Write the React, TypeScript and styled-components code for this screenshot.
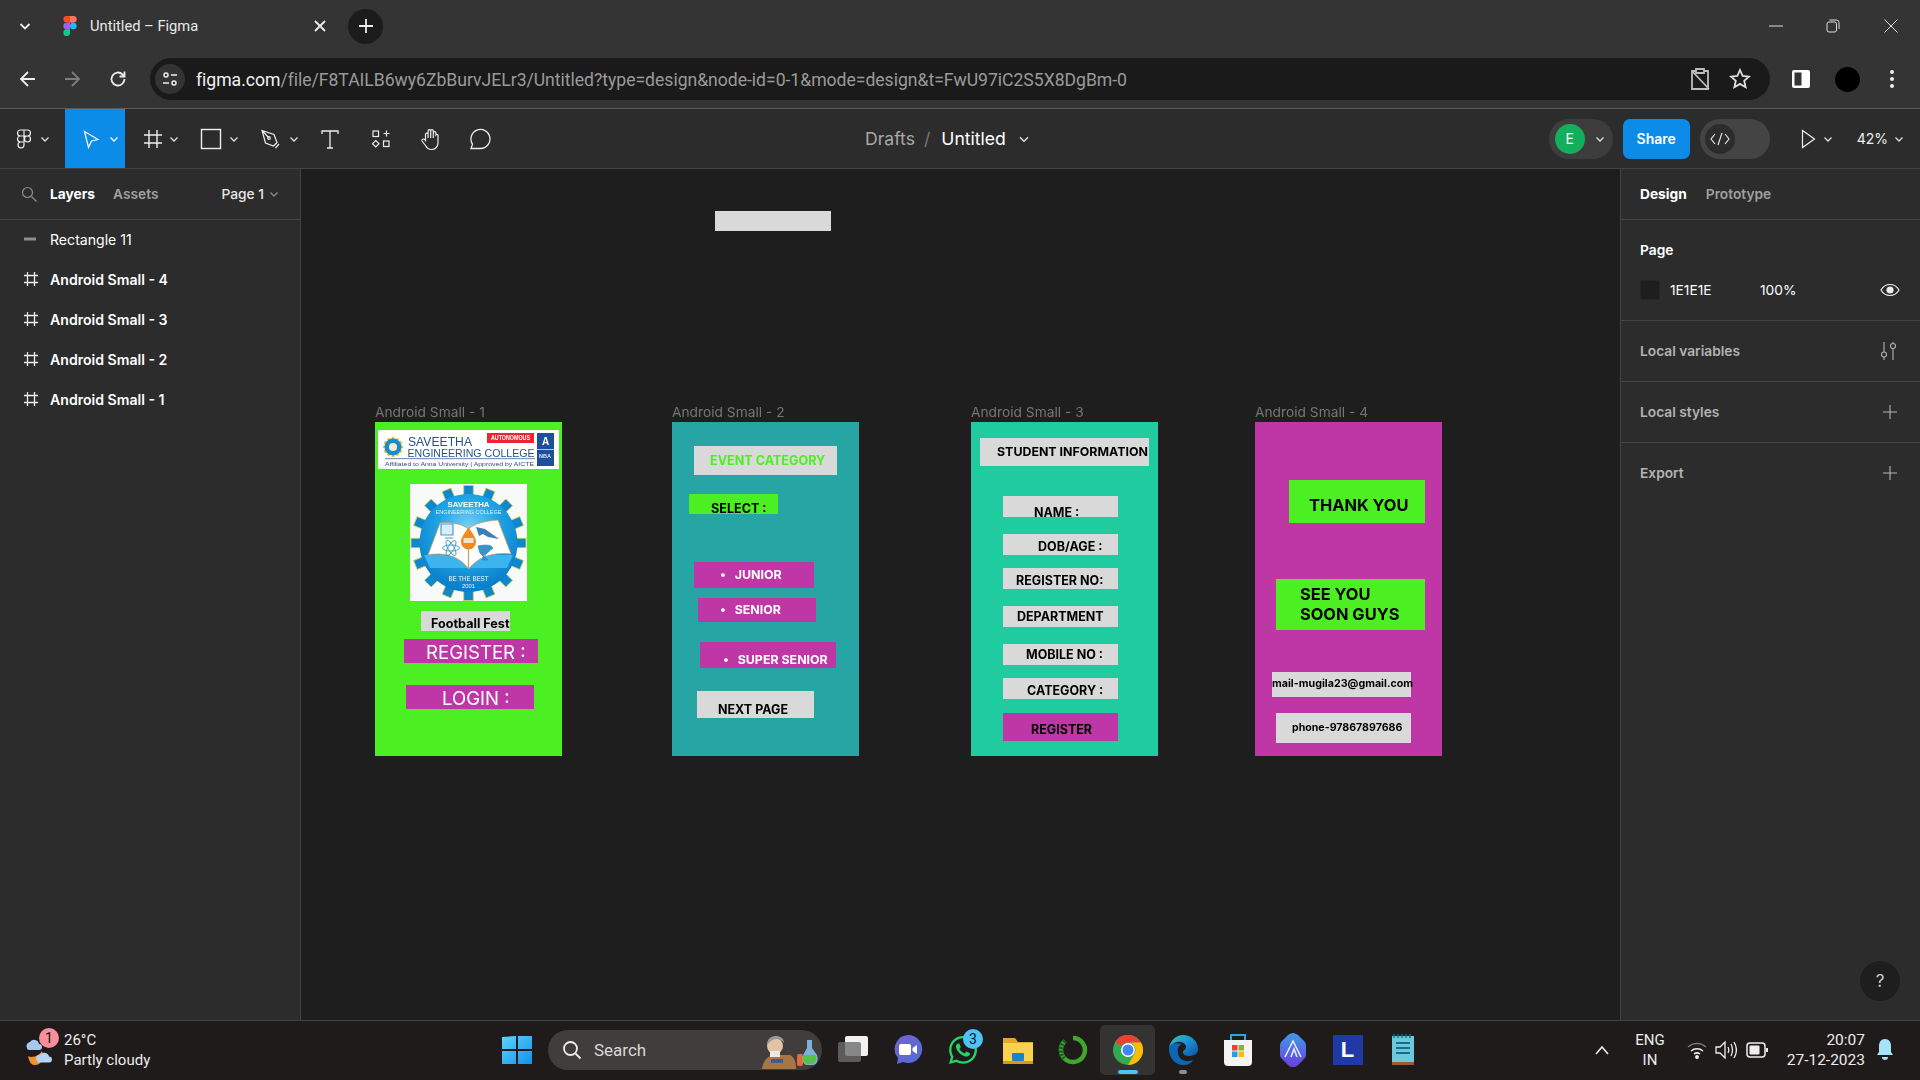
import React from "react";
import styled, { createGlobalStyle } from "styled-components";
import { FaWhatsapp } from "react-icons/fa";

const Global = createGlobalStyle`
  html, body { margin: 0; padding: 0; background: #1e1e1e; overflow: hidden; }
  * { box-sizing: border-box; }
`;

const Page = styled.div`
  width: 1920px; height: 1080px; display: flex; flex-direction: column; overflow: hidden;
  font-family: Inter, "Liberation Sans", sans-serif; color: #fff;
`;
/* Browser chrome */
const TabStrip = styled.div`
  height: 54px; background: #343434; display: flex; align-items: center; padding: 0 0 2px 17px; font-family: Roboto, sans-serif;
`;
const StripSlot = styled.div<{ $w: number }>`
  width: ${p => p.$w}px; display: flex; align-items: center; flex: none;
`;
const TabTitle = styled.span`
  font-size: 14.7px; color: #e8e8e8; margin-left: 13px; flex: 1; white-space: nowrap;
`;
const NewTab = styled.div`
  width: 35px; height: 35px; border-radius: 50%; background: #1c1c1c; display: flex; align-items: center; justify-content: center; flex: none;
`;
const WindowControls = styled.div`
  margin-left: auto; display: flex; height: 100%; align-items: center;
`;
const WinBtn = styled.div<{ $w: number }>`
  width: ${p => p.$w}px; display: flex; justify-content: center; align-items: center;
`;
const AddressRow = styled.div`
  height: 55px; background: #343434; border-bottom: 1px solid #5a5a5a; display: flex; align-items: flex-start; padding: 4px 0 0 0;
`;
const NavBtn = styled.div<{ $w: number }>`
  width: ${p => p.$w}px; height: 42px; display: flex; align-items: center; justify-content: center; flex: none;
`;
const Omnibox = styled.div`
  width: 1620px; height: 42px; margin-left: 4px; border-radius: 21px; background: #1a1a1a; display: flex; align-items: center; padding: 0 10px 0 5px; flex: none;
`;
const SiteChip = styled.div`
  width: 30px; height: 30px; border-radius: 50%; background: #333; display: flex; align-items: center; justify-content: center; flex: none;
`;
const UrlText = styled.div`
  margin-left: 11px; padding-top: 1px; font: 17.63px Roboto, sans-serif; color: #9a9a9a; white-space: nowrap; flex: 1;
  letter-spacing: -0.03px;
  b { font-weight: 400; color: #f2f2f2; }
`;
const OmniIcon = styled.div`
  width: 40px; display: flex; justify-content: center; flex: none;
`;
const Avatar = styled.div`
  width: 25px; height: 25px; border-radius: 50%; background: #000;
`;
/* Figma toolbar */
const Toolbar = styled.div`
  height: 60px; background: #2c2c2c; border-bottom: 1px solid #444; display: flex; align-items: stretch; flex: none;
`;
const ToolBtn = styled.div<{ $w: number; $pl: number; $gap?: number; $on?: boolean }>`
  width: ${p => p.$w}px; padding-left: ${p => p.$pl}px; gap: ${p => p.$gap ?? 0}px; flex: none;
  background: ${p => (p.$on ? "#0c8ce9" : "transparent")}; display: flex; align-items: center;
`;
const Title = styled.div`
  margin-left: 360px; display: flex; align-items: center; font-size: 17.6px; white-space: nowrap;
`;
const Muted = styled.span`
  color: #a8a8a8;
`;
const Slash = styled.span`
  color: #777; margin: 0 11px 0 9px;
`;
const ToolRight = styled.div`
  margin-left: auto; display: flex; align-items: center; padding-right: 15px;
`;
const UserPill = styled.div`
  width: 64px; height: 40px; border-radius: 20px; background: #3d3d3d; display: flex; align-items: center; padding-left: 6px; gap: 9px;
`;
const UserDot = styled.div`
  width: 30px; height: 30px; border-radius: 50%; background: #14ae5c; display: flex; align-items: center; justify-content: center; font-size: 14px;
`;
const ShareBtn = styled.div`
  width: 67px; height: 40px; margin-left: 10px; border-radius: 7px; background: #0c8ce9; display: flex; align-items: center; justify-content: center; font-size: 14px; font-weight: 600;
`;
const CodePill = styled.div`
  width: 70px; height: 40px; margin-left: 10px; border-radius: 20px; background: #444; display: flex; align-items: center; padding-left: 5px;
`;
const CodeKnob = styled.div`
  width: 30px; height: 30px; border-radius: 50%; background: #2c2c2c; display: flex; align-items: center; justify-content: center;
`;
const PlayGroup = styled.div`
  display: flex; align-items: center; margin-left: 31px; gap: 6px;
`;
const Zoom = styled.div`
  display: flex; align-items: center; margin-left: 23px; gap: 5px; font-size: 14px; color: #f0f0f0;
`;
/* Workspace */
const Workspace = styled.div`
  flex: 1; display: flex; min-height: 0;
`;
const LeftPanel = styled.div`
  width: 301px; flex: none; background: #2c2c2c; border-right: 1px solid #444;
`;
const PanelHead = styled.div<{ $pl?: number }>`
  height: 51px; border-bottom: 1px solid #444; display: flex; align-items: center; font-size: 13.75px; font-weight: 600; padding-left: ${p => p.$pl ?? 21}px;
`;
const HeadTab = styled.span<{ $on?: boolean; $ml: number }>`
  margin-left: ${p => p.$ml}px; color: ${p => (p.$on ? "#fff" : "#a0a0a0")}; font-weight: ${p => (p.$on ? 700 : 600)};
`;
const PageSel = styled.span`
  margin-left: auto; margin-right: 20px; display: flex; align-items: center; gap: 4px; color: #e6e6e6; font-weight: 500;
`;
const LayerList = styled.div`
  margin-top: -1px;
`;
const LayerRow = styled.div<{ $bold?: boolean }>`
  height: 40px; display: flex; align-items: center; padding-left: 23px; gap: 13px; font-size: 14.1px; font-weight: ${p => (p.$bold ? 600 : 400)}; color: #fff;
`;
const GlyphBox = styled.span`
  flex: none; width: 14px; height: 16px; display: flex;
`;
const Canvas = styled.div`
  flex: 1; background: #1e1e1e; position: relative;
`;
const TopRect = styled.div`
  position: absolute; left: 414px; top: 42px; width: 116px; height: 20px; background: #d9d9d9;
`;
const DesignFrame = styled.div<{ $x: number; $bg: string }>`
  position: absolute; left: ${p => p.$x}px; top: 253px; width: 187px; height: 334px; background: ${p => p.$bg}; filter: blur(0.3px);
`;
const FrameLabel = styled.div`
  position: absolute; left: 0; top: -18px; font-size: 13.75px; line-height: 16px; color: #757575; white-space: nowrap;
`;
const Block = styled.div<{ $x: number; $y: number; $w: number; $h: number; $bg: string }>`
  position: absolute; left: ${p => p.$x}px; top: ${p => p.$y}px; width: ${p => p.$w}px; height: ${p => p.$h}px; background: ${p => p.$bg};
`;
const BlockText = styled.div<{ $tx: number; $cy: number; $fs: number; $fw: number; $c: string; $lh: number }>`
  position: absolute; left: ${p => p.$tx}px; top: ${p => p.$cy - p.$lh / 2}px; font-size: ${p => p.$fs}px; font-weight: ${p => p.$fw};
  color: ${p => p.$c}; line-height: ${p => p.$lh}px; white-space: pre;
`;
const Art = styled.svg`
  position: absolute; inset: 0; width: 100%; height: 100%; display: block;
`;
const RightPanel = styled.div`
  width: 300px; flex: none; background: #2c2c2c; border-left: 1px solid #444; position: relative;
`;
const PageSection = styled.div`
  height: 101px; border-bottom: 1px solid #444; padding: 21px 0 0 19px;
`;
const SectionTitle = styled.div`
  font-size: 13.75px; font-weight: 600; line-height: 18px;
`;
const FillRow = styled.div`
  margin-top: 21px; display: flex; align-items: center; font-size: 13.75px; height: 20px; padding-right: 20px;
`;
const Swatch = styled.div`
  width: 20px; height: 20px; background: #1e1e1e; border: 1px solid #252525;
`;
const FillName = styled.span`
  margin-left: 10px; width: 90px;
`;
const FillEnd = styled.span`
  margin-left: auto; display: flex;
`;
const AccRow = styled.div<{ $last?: boolean }>`
  height: ${p => (p.$last ? 59 : 61)}px; border-bottom: ${p => (p.$last ? "none" : "1px solid #444")}; display: flex; align-items: center; justify-content: space-between;
  padding: 0 22px 0 19px; font-size: 13.75px; font-weight: 600; color: #b3b3b3;
`;
const Help = styled.div`
  position: absolute; right: 20px; bottom: 19px; width: 40px; height: 40px; border-radius: 50%; background: #1e1e1e;
  display: flex; align-items: center; justify-content: center; font-size: 17px; color: #d0d0d0;
`;
/* Windows taskbar */
const Taskbar = styled.div`
  height: 60px; flex: none; background: #1f1b1b; border-top: 1px solid #444; display: flex; align-items: center; padding-bottom: 2px; font-family: Roboto, sans-serif;
`;
const Weather = styled.div`
  width: 489px; flex: none; display: flex; align-items: center; padding-left: 23px; gap: 5px;
`;
const WeatherIcon = styled.div`
  width: 36px; height: 36px; position: relative; flex: none;
`;
const Badge = styled.span<{ $bg: string; $x: number; $y: number }>`
  position: absolute; left: ${p => p.$x}px; top: ${p => p.$y}px; width: 20px; height: 20px; border-radius: 50%; background: ${p => p.$bg};
  display: flex; align-items: center; justify-content: center; font-size: 14px; color: #111; font-family: Roboto, sans-serif;
`;
const TwoLine = styled.div<{ $align?: string; $fs?: number }>`
  display: flex; flex-direction: column; font-size: ${p => p.$fs ?? 15}px; line-height: 20px; color: #ececec; text-align: ${p => p.$align ?? "left"}; white-space: nowrap;
`;
const TaskSlot = styled.div<{ $w?: number; $on?: boolean }>`
  width: ${p => p.$w ?? 55}px; height: 50px; flex: none; display: flex; align-items: center; justify-content: center; position: relative;
  border-radius: 5px; background: ${p => (p.$on ? "#353232" : "transparent")}; color: #fff;
`;
const RunDot = styled.span<{ $w: number; $c: string }>`
  position: absolute; bottom: 1px; left: 50%; margin-left: ${p => -p.$w / 2}px; width: ${p => p.$w}px; height: 4px; border-radius: 2px; background: ${p => p.$c};
`;
const SearchBox = styled.div`
  width: 274px; height: 40px; margin: 0 3px 0 4px; flex: none; border-radius: 20px; background: #413d3c; display: flex; align-items: center; padding-left: 14px;
  gap: 12px; font-size: 17px; color: #d8d8d8; position: relative; overflow: hidden;
`;
const SearchArt = styled.svg`
  margin-left: auto; flex: none; display: block;
`;
const LTile = styled.div`
  width: 30px; height: 30px; background: #1f3aa6; display: flex; align-items: center; justify-content: center; font: 700 22px "Liberation Sans", sans-serif; color: #fff;
`;
const Tray = styled.div`
  margin-left: auto; padding-right: 26px; display: flex; align-items: center;
`;
const TraySlot = styled.div<{ $w: number; $end?: boolean }>`
  width: ${p => p.$w}px; flex: none; display: flex; justify-content: ${p => (p.$end ? "flex-end" : "center")};
`;

const Chev = ({ c = "#e0e0e0", s = 12 }: { c?: string; s?: number }) => (
  <svg width={s} height={s} viewBox="0 0 12 12" fill="none" stroke={c} strokeWidth="1.3"><path d="M2.5 4.500 6 8l3.500-3.500" /></svg>
);
const I = ({ children, w = 24, h = 24, vb }: { children: React.ReactNode; w?: number; h?: number; vb?: string }) => (
  <svg width={w} height={h} viewBox={vb ?? `0 0 ${w} ${h}`} fill="none" stroke="#eee" strokeWidth="1.2" style={{ flex: "none", display: "block" }}>{children}</svg>
);
const FrameGlyph = () => (
  <I w={16} h={16}><path d="M4.500 1v14M11.500 1v14M1 4.500h14M1 11.500h14" strokeWidth="1.3" /></I>
);

const BL = "#d9d9d9", GR = "#4cf022", MG = "#bf36a7";
type B = { x: number; y: number; w: number; h: number; bg: string; t: string; tx: number; cy: number; fs: number; fw?: number; c?: string; lh?: number };
const frame1: B[] = [
  { x: 46, y: 189, w: 89, h: 20, bg: BL, t: "Football Fest", tx: 10, cy: 12.5, fs: 12.6, c: "#000" },
  { x: 29, y: 217, w: 134, h: 24, bg: MG, t: "REGISTER :", tx: 22, cy: 13, fs: 18.6, fw: 400, c: "#fff", lh: 22 },
  { x: 31, y: 263, w: 128, h: 24, bg: MG, t: "LOGIN :", tx: 36, cy: 13, fs: 18.6, fw: 400, c: "#fff", lh: 22 },
];
const frame2: B[] = [
  { x: 22, y: 24, w: 143, h: 29, bg: BL, t: "EVENT CATEGORY", tx: 16, cy: 15, fs: 12.6, c: GR },
  { x: 17, y: 72, w: 89, h: 20, bg: GR, t: "SELECT :", tx: 22, cy: 15, fs: 12.6, c: "#000" },
  { x: 22, y: 140, w: 120, h: 26, bg: MG, t: "•   JUNIOR", tx: 26, cy: 13, fs: 12.4, c: "#fff" },
  { x: 26, y: 176, w: 118, h: 24, bg: MG, t: "•   SENIOR", tx: 22, cy: 12, fs: 12.4, c: "#fff" },
  { x: 28, y: 220, w: 136, h: 26, bg: MG, t: "•   SUPER SENIOR", tx: 23, cy: 18, fs: 12.4, c: "#fff" },
  { x: 25, y: 269, w: 117, h: 27, bg: BL, t: "NEXT PAGE", tx: 21, cy: 19, fs: 12.5, c: "#000" },
];
const frame3: B[] = [
  { x: 9, y: 16, w: 169, h: 28, bg: BL, t: "STUDENT INFORMATION", tx: 17, cy: 14, fs: 12.4, c: "#000" },
  { x: 32, y: 74, w: 115, h: 21, bg: BL, t: "NAME :", tx: 31, cy: 17, fs: 12.5, c: "#000" },
  { x: 32, y: 112, w: 115, h: 21, bg: BL, t: "DOB/AGE :", tx: 35, cy: 13, fs: 12.5, c: "#000" },
  { x: 32, y: 146, w: 115, h: 21, bg: BL, t: "REGISTER NO:", tx: 13, cy: 13, fs: 12.5, c: "#000" },
  { x: 32, y: 184, w: 115, h: 21, bg: BL, t: "DEPARTMENT", tx: 14, cy: 11, fs: 12.5, c: "#000" },
  { x: 32, y: 222, w: 115, h: 21, bg: BL, t: "MOBILE NO :", tx: 23, cy: 11, fs: 12.5, c: "#000" },
  { x: 32, y: 256, w: 115, h: 21, bg: BL, t: "CATEGORY :", tx: 24, cy: 13, fs: 12.5, c: "#000" },
  { x: 32, y: 291, w: 115, h: 28, bg: MG, t: "REGISTER", tx: 28, cy: 17, fs: 12.5, c: "#000" },
];
const frame4: B[] = [
  { x: 34, y: 58, w: 136, h: 43, bg: GR, t: "THANK YOU", tx: 20, cy: 25, fs: 16.4, c: "#000", lh: 20 },
  { x: 21, y: 157, w: 149, h: 51, bg: GR, t: "SEE YOU\nSOON GUYS", tx: 24, cy: 15, fs: 16.4, c: "#000", lh: 20 },
  { x: 17, y: 250, w: 139, h: 25, bg: BL, t: "mail-mugila23@gmail.com", tx: 0, cy: 12, fs: 10.7, c: "#000" },
  { x: 21, y: 291, w: 135, h: 30, bg: BL, t: "phone-97867897686", tx: 16, cy: 15, fs: 10.6, c: "#000" },
];
const Blocks = ({ items }: { items: B[] }) => (
  <>
    {items.map(b => (
      <Block key={b.t} $x={b.x} $y={b.y} $w={b.w} $h={b.h} $bg={b.bg}>
        <BlockText $tx={b.tx} $cy={b.cy} $fs={b.fs} $fw={b.fw ?? 700} $c={b.c ?? "#000"} $lh={b.lh ?? 16}>{b.t}</BlockText>
      </Block>
    ))}
  </>
);

const gearTeeth = (cx: number, cy: number, r: number, n: number, tw: number, th: number, fill: string, stroke?: string) =>
  Array.from({ length: n }, (_, i) => (
    <rect key={i} x={cx - tw / 2} y={cy - r - th} width={tw} height={th + 2} fill={fill} stroke={stroke} strokeWidth={stroke ? 0.8 : 0}
      transform={`rotate(${(360 / n) * i} ${cx} ${cy})`} />
  ));

const Banner = () => (
  <Art viewBox="0 0 181 39">
    <rect width="181" height="39" fill="#fff" />
    {gearTeeth(15, 17, 8, 12, 2.6, 2, "#e3c52c")}
    <circle cx="15" cy="17" r="8.500" fill="#1b8ccb" />
    <circle cx="15" cy="17" r="4" fill="#f4f0d8" />
    <text x="30" y="15.800" fontSize="12.500" fill="#24528f" textLength="64" lengthAdjust="spacingAndGlyphs" fontFamily="Liberation Sans">SAVEETHA</text>
    <text x="29.500" y="26.700" fontSize="10.800" fill="#24528f" textLength="127" lengthAdjust="spacingAndGlyphs" fontFamily="Liberation Sans">ENGINEERING COLLEGE</text>
    <rect x="7" y="28.400" width="150" height="0.700" fill="#24528f" />
    <text x="7" y="35.500" fontSize="5.400" fill="#2b4e87" textLength="149" lengthAdjust="spacingAndGlyphs" fontFamily="Liberation Sans">Affiliated to Anna University | Approved by AICTE</text>
    <rect x="109" y="3" width="47" height="10" fill="#ee2430" />
    <text x="113" y="10.300" fontSize="6.400" fontWeight="700" fill="#fff" textLength="39" lengthAdjust="spacingAndGlyphs" fontFamily="Liberation Sans">AUTONOMOUS</text>
    <rect x="159" y="3" width="17" height="33" fill="#1c4f9c" />
    <text x="164" y="15" fontSize="10" fontWeight="700" fill="#fff" fontFamily="Liberation Sans">A</text>
    <rect x="159" y="19" width="17" height="0.700" fill="#fff" />
    <text x="161" y="28" fontSize="5.500" fontWeight="700" fill="#d8e6f7" fontFamily="Liberation Sans">NBA</text>
  </Art>
);

const Emblem = () => (
  <Art viewBox="0 0 117 117">
    <defs>
      <radialGradient id="emb" cx="50%" cy="35%" r="62%">
        <stop offset="0" stopColor="#7ad2f5" /><stop offset="0.5" stopColor="#1ea5e6" /><stop offset="1" stopColor="#0c7fca" />
      </radialGradient>
    </defs>
    <rect width="117" height="117" fill="#f8fafa" />
    {gearTeeth(58.500, 59, 48, 16, 9.500, 9.500, "#0f86d0", "#c9d64a")}
    <circle cx="58.500" cy="59" r="49" fill="url(#emb)" />
    <path d="M14 71h89l-6 13H20z" fill="#3db4ee" />
    <path d="M30 39c12-1 22 1 28.500 6 7-6 17-8 29.500-9l13 34c-17-2-32 2-42.500 15-9-13-24-17-40.500-14z" fill="#fff" stroke="#c89a5c" strokeWidth="0.800" />
    <path d="M58.500 46v39" stroke="#c89a5c" strokeWidth="1.200" />
    <path d="M58.500 43c4 7 7.500 10 7.500 15a7.500 7.500 0 0 1-15 0c0-5 3.500-8 7.500-15z" fill="#f18a1d" />
    <rect x="53.500" y="54" width="10" height="5" fill="#f7e3c8" />
    <path d="M31 40h12v11H31zM35 54h8" stroke="#4c9ac9" strokeWidth="1.200" fill="#d8eef9" />
    <g fill="none" stroke="#2f8fc4" strokeWidth="0.800">
      <ellipse cx="41" cy="64" rx="8.500" ry="3" />
      <ellipse cx="41" cy="64" rx="8.500" ry="3" transform="rotate(60 41 64)" />
      <ellipse cx="41" cy="64" rx="8.500" ry="3" transform="rotate(-60 41 64)" />
    </g>
    <path d="M66 43l9 2 14 10-11-2-5-3-4 2z" fill="#3a7fb5" />
    <path d="M68 62c6-1 12-2 15 2-3 3-7 5-9 9l-4-4zM74 70l-2 6h6" stroke="#2f8fc4" fill="#3b91c8" strokeWidth="0.800" />
    <text x="58.500" y="22.700" fontSize="8" fontWeight="700" fill="#fff" textAnchor="middle" textLength="42" lengthAdjust="spacingAndGlyphs" fontFamily="Liberation Sans">SAVEETHA</text>
    <text x="58.500" y="30" fontSize="5.400" fill="#dff2fb" textAnchor="middle" textLength="66" lengthAdjust="spacingAndGlyphs" fontFamily="Liberation Sans">ENGINEERING COLLEGE</text>
    <text x="58.500" y="97" fontSize="6.600" fill="#f1f9fd" textAnchor="middle" textLength="40" lengthAdjust="spacingAndGlyphs" fontFamily="Liberation Sans">BE THE BEST</text>
    <text x="58.500" y="103.500" fontSize="5.800" fill="#f1f9fd" textAnchor="middle" fontFamily="Liberation Sans">2001</text>
  </Art>
);

const ChromeIcon = () => (
  <svg width="30" height="30" viewBox="0 0 30 30">
    <circle cx="15" cy="15" r="15" fill="#34a853" />
    <path d="M15 0a15 15 0 0 1 13 7.500H15a7.500 7.500 0 0 0-6.500 3.750L2 7A15 15 0 0 1 15 0z" fill="#ea4335" />
    <path d="M28 7.500A15 15 0 0 1 15 30l6.500-11.250A7.500 7.500 0 0 0 15 7.500z" fill="#fbbc05" />
    <circle cx="15" cy="15" r="7" fill="#fff" /><circle cx="15" cy="15" r="5.500" fill="#4285f4" />
  </svg>
);

export default function App() {
  return (
    <Page>
      <Global />
      <TabStrip>
        <StripSlot $w={46}>
          <svg width="16" height="16" viewBox="0 0 16 16" fill="none" stroke="#eee" strokeWidth="1.800"><path d="M3.500 6 8 10.500 12.500 6" /></svg>
        </StripSlot>
        <StripSlot $w={285}>
          <svg width="14" height="20" viewBox="0 0 38 57" style={{ flex: "none" }}>
            <path d="M19 28.500a9.500 9.500 0 1 1 19 0 9.500 9.500 0 0 1-19 0z" fill="#1abcfe" />
            <path d="M0 47.500A9.500 9.500 0 0 1 9.500 38H19v9.500a9.500 9.500 0 1 1-19 0z" fill="#0acf83" />
            <path d="M19 0v19h9.500a9.500 9.500 0 1 0 0-19z" fill="#ff7262" />
            <path d="M0 9.500A9.500 9.500 0 0 0 9.500 19H19V0H9.500A9.500 9.500 0 0 0 0 9.500z" fill="#f24e1e" />
            <path d="M0 28.500A9.500 9.500 0 0 0 9.500 38H19V19H9.500A9.500 9.500 0 0 0 0 28.500z" fill="#a259ff" />
          </svg>
          <TabTitle>Untitled – Figma</TabTitle>
          <svg width="14" height="14" viewBox="0 0 14 14" stroke="#eee" strokeWidth="1.800" style={{ flex: "none", marginRight: 21 }}><path d="M2 2l10 10M12 2 2 12" /></svg>
        </StripSlot>
        <NewTab>
          <svg width="16" height="16" viewBox="0 0 16 16" stroke="#eee" strokeWidth="1.800"><path d="M8 1v14M1 8h14" /></svg>
        </NewTab>
        <WindowControls>
          <WinBtn $w={56}><svg width="14" height="14" viewBox="0 0 14 14" stroke="#ddd"><path d="M0 7h14" /></svg></WinBtn>
          <WinBtn $w={58}><svg width="14" height="14" viewBox="0 0 14 14" fill="none" stroke="#ddd"><rect x="1" y="3" width="9.500" height="10" rx="2" /><path d="M3.500 1h7a2.500 2.500 0 0 1 2.500 2.500V10" /></svg></WinBtn>
          <WinBtn $w={58}><svg width="14" height="14" viewBox="0 0 14 14" stroke="#ddd"><path d="M.5.5l13 13M13.500.5l-13 13" /></svg></WinBtn>
        </WindowControls>
      </TabStrip>
      <AddressRow>
        <NavBtn $w={55}><svg width="18" height="18" viewBox="0 0 18 18" fill="none" stroke="#eee" strokeWidth="1.800"><path d="M16 9H2M9 2 2 9l7 7" /></svg></NavBtn>
        <NavBtn $w={34}><svg width="18" height="18" viewBox="0 0 18 18" fill="none" stroke="#7d7d7d" strokeWidth="1.800"><path d="M2 9h14M9 2l7 7-7 7" /></svg></NavBtn>
        <NavBtn $w={57}><svg width="18" height="18" viewBox="0 0 18 18" fill="none" stroke="#eee" strokeWidth="1.800"><path d="M15.500 9a6.500 6.500 0 1 1-2-4.700L15.500 6.500M15.500 1.500v5h-5" /></svg></NavBtn>
        <Omnibox>
          <SiteChip>
            <svg width="18" height="18" viewBox="0 0 18 18" fill="none" stroke="#eee" strokeWidth="1.500"><circle cx="5" cy="5" r="2" /><path d="M10 5h6M2 13h6" /><circle cx="13" cy="13" r="2" /></svg>
          </SiteChip>
          <UrlText><b>figma.com</b>/file/F8TAILB6wy6ZbBurvJELr3/Untitled?type=design&amp;node-id=0-1&amp;mode=design&amp;t=FwU97iC2S5X8DgBm-0</UrlText>
          <OmniIcon>
            <svg width="22" height="24" viewBox="0 0 22 24" fill="none" stroke="#bdbdbd" strokeWidth="1.800"><path d="M7 4H3v18h16V4h-4M7 2h8v4H7zM3 4l17 18" /></svg>
          </OmniIcon>
          <OmniIcon>
            <svg width="22" height="22" viewBox="0 0 22 22" fill="none" stroke="#e0e0e0" strokeWidth="1.800"><path d="m11 2 2.700 6 6.300.6-4.800 4.200 1.400 6.400L11 15.900l-5.600 3.300 1.400-6.400L2 8.600 8.300 8z" /></svg>
          </OmniIcon>
        </Omnibox>
        <NavBtn $w={62}>
          <svg width="18" height="18" viewBox="0 0 18 18"><rect x="0" y="0" width="18" height="18" rx="2" fill="#fff" /><rect x="2.500" y="2.500" width="7" height="13" fill="#343434" /></svg>
        </NavBtn>
        <NavBtn $w={30}><Avatar /></NavBtn>
        <NavBtn $w={60}>
          <svg width="6" height="20" viewBox="0 0 6 20" fill="#eee"><circle cx="3" cy="3" r="2" /><circle cx="3" cy="10" r="2" /><circle cx="3" cy="17" r="2" /></svg>
        </NavBtn>
      </AddressRow>
      <Toolbar>
        <ToolBtn $w={65} $pl={12} $gap={3}>
          <I><path d="M12 3H8.500a3 3 0 0 0 0 6H12zM12 3h3.500a3 3 0 0 1 0 6H12zM12 9H8.500a3 3 0 0 0 0 6H12zM15.500 9a3 3 0 1 1 0 6 3 3 0 0 1 0-6zM12 15H8.500a3 3 0 1 0 3.500 3z" /></I><Chev />
        </ToolBtn>
        <ToolBtn $w={60} $pl={13} $gap={6} $on>
          <I><path d="M6.500 4.500 20 12.500l-6.500 1.500-3 6.500z" stroke="#fff" /></I><Chev c="#fff" />
        </ToolBtn>
        <ToolBtn $w={66} $pl={16} $gap={3}>
          <I><path d="M8 3v18M16 3v18M3 8h18M3 16h18" strokeWidth="1.400" /></I><Chev />
        </ToolBtn>
        <ToolBtn $w={59} $pl={8} $gap={5}>
          <I><rect x="2.500" y="2.500" width="19" height="19" strokeWidth="1.400" /></I><Chev />
        </ToolBtn>
        <ToolBtn $w={60} $pl={8} $gap={6}>
          <I><path d="M4 3.500 16 7.500l3 8-3.500 3.500-8-3zM4 3.500l6.500 7M21 17l-3.500 4" /><circle cx="11" cy="11" r="1.300" /></I><Chev />
        </ToolBtn>
        <ToolBtn $w={45} $pl={8}>
          <I><path d="M4 7V4h16v3M12 4v17M9 21h6" strokeWidth="1.300" /></I>
        </ToolBtn>
        <ToolBtn $w={50} $pl={14}>
          <I><rect x="4" y="4" width="5.500" height="5.500" /><path d="M17.500 3.500v6M14.500 6.500h6M6.750 13.500l3.200 3.200-3.200 3.200-3.200-3.200z" /><rect x="14.500" y="14" width="5.500" height="5.500" /></I>
        </ToolBtn>
        <ToolBtn $w={50} $pl={13}>
          <I><path d="M7.500 14V7.500a1.300 1.300 0 0 1 2.600 0V4a1.300 1.300 0 0 1 2.600 0v-.3M12.700 4a1.300 1.300 0 0 1 2.600 0v7M15.300 6a1.300 1.300 0 0 1 2.600 0V8a1.300 1.300 0 0 1 2.100 0v8c0 4-3 6.500-6.500 6.500-3 0-4.700-1.500-6-4L4 14c-.7-1.500 1.500-3 3-1l1 1.500M10.100 7.500V11M12.700 4v7" /></I>
        </ToolBtn>
        <ToolBtn $w={50} $pl={13}>
          <I><path d="M3 21.500h9.500a9.500 9.500 0 1 0-8-4.300z" strokeWidth="1.300" /></I>
        </ToolBtn>
        <Title>
          <Muted>Drafts</Muted><Slash>/</Slash><span>Untitled</span>
          <svg width="14" height="14" viewBox="0 0 12 12" fill="none" stroke="#ddd" strokeWidth="1.200" style={{ marginLeft: 11 }}><path d="M2.500 4.500 6 8l3.500-3.500" /></svg>
        </Title>
        <ToolRight>
          <UserPill><UserDot>E</UserDot><Chev /></UserPill>
          <ShareBtn>Share</ShareBtn>
          <CodePill>
            <CodeKnob>
              <svg width="20" height="16" viewBox="0 0 20 16" fill="none" stroke="#eee" strokeWidth="1.100"><path d="M5 3 1 8l4 5M15 3l4 5-4 5M12 2 8 14" /></svg>
            </CodeKnob>
          </CodePill>
          <PlayGroup>
            <svg width="15" height="20" viewBox="0 0 15 20" fill="none" stroke="#eee" strokeWidth="1.200"><path d="M1.500 1.500v17L13.500 10z" /></svg>
            <Chev />
          </PlayGroup>
          <Zoom>42%<Chev /></Zoom>
        </ToolRight>
      </Toolbar>
      <Workspace>
        <LeftPanel>
          <PanelHead>
            <svg width="16" height="16" viewBox="0 0 16 16" fill="none" stroke="#8c8c8c" strokeWidth="1.200" style={{ flex: "none" }}><circle cx="6.500" cy="6.500" r="5" /><path d="m10.500 10.500 5 5" /></svg>
            <HeadTab $on $ml={13}>Layers</HeadTab>
            <HeadTab $ml={18}>Assets</HeadTab>
            <PageSel>Page 1 <Chev c="#8c8c8c" /></PageSel>
          </PanelHead>
          <LayerList>
            <LayerRow>
              <svg width="14" height="14" viewBox="0 0 14 14" style={{ flex: "none" }}><rect x="1" y="5.500" width="12" height="3" fill="#8e8e8e" /></svg>
              Rectangle 11
            </LayerRow>
            {[4, 3, 2, 1].map(n => (
              <LayerRow $bold key={n}><GlyphBox><FrameGlyph /></GlyphBox><span>Android Small - {n}</span></LayerRow>
            ))}
          </LayerList>
        </LeftPanel>
        <Canvas>
          <TopRect />
          <DesignFrame $x={74} $bg={GR}>
            <FrameLabel>Android Small - 1</FrameLabel>
            <Block $x={3} $y={8} $w={181} $h={39} $bg="#fff"><Banner /></Block>
            <Block $x={35} $y={62} $w={117} $h={117} $bg="#f8fafa"><Emblem /></Block>
            <Blocks items={frame1} />
          </DesignFrame>
          <DesignFrame $x={371} $bg="#27a4a4">
            <FrameLabel>Android Small - 2</FrameLabel>
            <Blocks items={frame2} />
          </DesignFrame>
          <DesignFrame $x={670} $bg="#20cba0">
            <FrameLabel>Android Small - 3</FrameLabel>
            <Blocks items={frame3} />
          </DesignFrame>
          <DesignFrame $x={954} $bg={MG}>
            <FrameLabel>Android Small - 4</FrameLabel>
            <Blocks items={frame4} />
          </DesignFrame>
        </Canvas>
        <RightPanel>
          <PanelHead $pl={19}>
            <HeadTab $on $ml={0}>Design</HeadTab>
            <HeadTab $ml={19}>Prototype</HeadTab>
          </PanelHead>
          <PageSection>
            <SectionTitle>Page</SectionTitle>
            <FillRow>
              <Swatch />
              <FillName>1E1E1E</FillName>
              <span>100%</span>
              <FillEnd>
                <svg width="20" height="14" viewBox="0 0 20 14" fill="none" stroke="#eee" strokeWidth="1.200"><path d="M1 7c2-3.500 5-5.500 9-5.500s7 2 9 5.500c-2 3.500-5 5.500-9 5.500S3 10.500 1 7z" /><circle cx="10" cy="7" r="3" fill="#eee" /></svg>
              </FillEnd>
            </FillRow>
          </PageSection>
          <AccRow>
            Local variables
            <svg width="18" height="20" viewBox="0 0 18 20" fill="none" stroke="#b3b3b3" strokeWidth="1.100"><path d="M4 1v10M4 16v3M13 1v1M13 8v11" /><circle cx="4" cy="13.500" r="2.500" /><circle cx="13" cy="5" r="2.500" /></svg>
          </AccRow>
          <AccRow>
            Local styles
            <svg width="16" height="16" viewBox="0 0 16 16" stroke="#b3b3b3" strokeWidth="1.100"><path d="M8 1v14M1 8h14" /></svg>
          </AccRow>
          <AccRow $last>
            Export
            <svg width="16" height="16" viewBox="0 0 16 16" stroke="#b3b3b3" strokeWidth="1.100"><path d="M8 1v14M1 8h14" /></svg>
          </AccRow>
          <Help>?</Help>
        </RightPanel>
      </Workspace>
      <Taskbar>
        <Weather>
          <WeatherIcon>
            <svg width="36" height="36" viewBox="0 0 36 36">
              <path d="M5 24c3 2 10 1 14-5 3 7-1 15-8 14-3 0-5-4-6-9z" fill="#f0932b" />
              <path d="M4 16a4 4 0 0 1 3-6 5 5 0 0 1 9 2 3 3 0 0 1 0 6H6a2 2 0 0 1-2-2z" fill="#a5c9ef" />
              <path d="M14 29a3.500 3.500 0 0 1 3-6 5 5 0 0 1 9 1.500 3 3 0 0 1 0 6H16a2 2 0 0 1-2-1.500z" fill="#b4d4f4" />
            </svg>
            <Badge $bg="#fa8f9b" $x={16} $y={-4}>1</Badge>
          </WeatherIcon>
          <TwoLine><span>26°C</span><span>Partly cloudy</span></TwoLine>
        </Weather>
        <TaskSlot>
          <svg width="30" height="30" viewBox="0 0 30 30">
            <defs><linearGradient id="win" x1="0" y1="0" x2="1" y2="1"><stop offset="0" stopColor="#5fd4fb" /><stop offset="1" stopColor="#1291e8" /></linearGradient></defs>
            <path d="M0 2 14 1v13H0zM16 1h14v13H16zM0 16h14v13H0zM16 16h14v13H16z" fill="url(#win)" />
          </svg>
        </TaskSlot>
        <SearchBox>
          <svg width="20" height="20" viewBox="0 0 20 20" fill="none" stroke="#eee" strokeWidth="1.800"><circle cx="8.500" cy="8.500" r="6.500" /><path d="m13.500 13.500 5 5" /></svg>
          <span>Search</span>
          <SearchArt width="60" height="38" viewBox="0 0 60 38">
            <path d="M0 38c1-9 6-13 12-14l16 0c4 2 6 6 6 14z" fill="#a87546" />
            <circle cx="13" cy="15" r="8" fill="#e3c3a3" />
            <path d="M5 14c0-7 5-9 9-9s8 2 8 7c-2-3-5-4-8-4s-6 2-9 6z" fill="#9a9a94" />
            <path d="M8 20h10v6H8z" fill="#ece7df" />
            <rect x="9" y="28" width="12" height="4" fill="#4a5a88" />
            <rect x="35" y="23" width="6" height="12" rx="2" fill="#e46a3a" />
            <path d="M45 9h5v8l5 7c2 6-1 10-4 10h-6c-3 0-6-4-4-10l4-7z" fill="#7fb0dc" />
            <path d="M41 24h13c1 5-1 9-4 9h-5c-3 0-5-4-4-9z" fill="#55c34b" />
          </SearchArt>
        </SearchBox>
        <TaskSlot>
          <svg width="30" height="27" viewBox="0 0 30 27">
            <rect x="7" y="0" width="23" height="20" rx="2" fill="#f1f1f1" />
            <rect x="0" y="6" width="23" height="20" rx="2" fill="#6d6d6d" opacity="0.800" />
          </svg>
        </TaskSlot>
        <TaskSlot>
          <svg width="30" height="29" viewBox="0 0 30 29">
            <defs><linearGradient id="tm" x1="0" y1="0" x2="1" y2="1"><stop offset="0" stopColor="#7a5fd0" /><stop offset="1" stopColor="#4a6fd8" /></linearGradient></defs>
            <path d="M15 0a14 14 0 1 1-5 27l-6 2 1-6A14 14 0 0 1 15 0z" fill="url(#tm)" />
            <rect x="6" y="9" width="12" height="11" rx="2" fill="#fff" />
            <path d="M19.500 13l4.500-3v9l-4.500-3z" fill="#fff" />
          </svg>
        </TaskSlot>
        <TaskSlot>
          <FaWhatsapp size={32} color="#25d366" />
          <Badge $bg="#4fc3f7" $x={28} $y={4}>3</Badge>
        </TaskSlot>
        <TaskSlot>
          <svg width="30" height="28" viewBox="0 0 30 28">
            <path d="M0 2h12l3 4h15v22H0z" fill="#e3a82b" />
            <rect x="0" y="7" width="30" height="21" fill="#fbd24c" />
            <rect x="9" y="17" width="12" height="8" rx="1" fill="#1c82cf" />
            <rect x="0" y="25" width="30" height="3" fill="#d49a1e" />
          </svg>
        </TaskSlot>
        <TaskSlot>
          <svg width="30" height="30" viewBox="0 0 30 30" fill="none">
            <path d="M15 3a12 12 0 1 1-8 3" stroke="#3fa72c" strokeWidth="4.500" />
            <path d="M7 6a12 12 0 0 0-4 9c0 4 1 7 3 9" stroke="#1e5c22" strokeWidth="4.500" strokeDasharray="2 1.500" />
          </svg>
        </TaskSlot>
        <TaskSlot $on>
          <ChromeIcon />
          <RunDot $w={20} $c="#4fc3f7" />
        </TaskSlot>
        <TaskSlot>
          <svg width="30" height="32" viewBox="0 0 30 32">
            <defs><linearGradient id="edge" x1="0" y1="0" x2="1" y2="1"><stop offset="0" stopColor="#35c9a8" /><stop offset="0.500" stopColor="#1b8fd6" /><stop offset="1" stopColor="#0d4f9c" /></linearGradient></defs>
            <path d="M15 1c8 0 15 6 15 14 0 5-4 7-9 7-3 0-6-1-6-4 0-2 3-2 3-5 0-3-4-6-9-5S1 14 1 13C3 6 8 1 15 1z" fill="url(#edge)" />
            <path d="M1 13c-1 10 6 18 14 18 4 0 8-1 10-5-7 3-14 0-15-7-1-5 1-8 4-9C8 8 2 10 1 13z" fill="#0c66b5" />
          </svg>
          <RunDot $w={8} $c="#8e8e8e" />
        </TaskSlot>
        <TaskSlot>
          <svg width="30" height="34" viewBox="0 0 30 34">
            <path d="M8 7V2h14v5" fill="none" stroke="#2aa7e0" strokeWidth="2" />
            <path d="M1 7h28v22a4 4 0 0 1-4 4H5a4 4 0 0 1-4-4z" fill="#f4f4f4" />
            <rect x="9" y="12" width="5.500" height="5.500" fill="#ea4335" /><rect x="15.500" y="12" width="5.500" height="5.500" fill="#7cb83f" />
            <rect x="9" y="18.500" width="5.500" height="5.500" fill="#1ea1e8" /><rect x="15.500" y="18.500" width="5.500" height="5.500" fill="#fbbc05" />
          </svg>
        </TaskSlot>
        <TaskSlot>
          <svg width="30" height="36" viewBox="0 0 30 36">
            <defs><linearGradient id="pr" x1="0" y1="0" x2="0" y2="1"><stop offset="0" stopColor="#3f9be8" /><stop offset="1" stopColor="#6a3fe0" /></linearGradient></defs>
            <path d="M15 1c2 0 3 1 5 2l6 6c2 2 2 3 2 6v6c0 3 0 4-2 6l-6 6c-2 2-3 2-5 2s-3 0-5-2l-6-6c-2-2-2-3-2-6v-6c0-3 0-4 2-6l6-6c2-1 3-2 5-2z" fill="url(#pr)" />
            <path d="M7 25 15 9l8 16M13 25l3-8 3 8" fill="none" stroke="#e5eefc" strokeWidth="1.600" />
          </svg>
        </TaskSlot>
        <TaskSlot><LTile>L</LTile></TaskSlot>
        <TaskSlot>
          <svg width="24" height="32" viewBox="0 0 24 32">
            <rect x="1" y="2" width="22" height="26" fill="#6fc7de" />
            <path d="M5 9h14M5 14h14M5 19h14" stroke="#15708c" strokeWidth="2.200" />
            <path d="M3 0v4M7 0v4M11 0v4M15 0v4M19 0v4" stroke="#15708c" strokeWidth="1.500" />
            <rect x="1" y="28" width="22" height="3" fill="#9c5c2c" />
          </svg>
        </TaskSlot>
        <Tray>
          <TraySlot $w={30}>
            <svg width="16" height="12" viewBox="0 0 16 12" fill="none" stroke="#eee" strokeWidth="1.600"><path d="m2 10 6-7 6 7" /></svg>
          </TraySlot>
          <TraySlot $w={66}><TwoLine $align="center"><span>ENG</span><span>IN</span></TwoLine></TraySlot>
          <TraySlot $w={28}>
            <svg width="20" height="18" viewBox="0 0 20 18" fill="none" stroke="#eee" strokeWidth="1.500"><path d="M1 6a13 13 0 0 1 18 0" stroke="#777" /><path d="M4 10a9 9 0 0 1 12 0M7 13a5 5 0 0 1 6 0" /><circle cx="10" cy="16" r="1.200" fill="#eee" /></svg>
          </TraySlot>
          <TraySlot $w={30}>
            <svg width="22" height="20" viewBox="0 0 22 20" fill="none" stroke="#eee" strokeWidth="1.300"><path d="M1 7h4l5-5v16l-5-5H1zM13 7c1 2 1 4 0 6M16 4c2 4 2 8 0 12M19 2c3 5 3 11 0 16" /></svg>
          </TraySlot>
          <TraySlot $w={32}>
            <svg width="22" height="16" viewBox="0 0 22 16"><rect x="1" y="1" width="18" height="14" rx="3" fill="none" stroke="#eee" strokeWidth="1.500" /><rect x="3.500" y="3.500" width="10" height="9" rx="1" fill="#eee" /><rect x="20" y="6" width="2" height="4" fill="#eee" /></svg>
          </TraySlot>
          <TraySlot $w={92} $end><TwoLine $align="right" $fs={15.5}><span>20:07</span><span>27-12-2023</span></TwoLine></TraySlot>
          <TraySlot $w={29} $end>
            <svg width="18" height="24" viewBox="0 0 18 24" fill="#a4e3f8"><path d="M9 1c-4 0-6 3-6 7v6l-2 3h16l-2-3V8c0-4-2-7-6-7z" /><path d="M6 19h6c0 2-1 3-3 3s-3-1-3-3z" /></svg>
          </TraySlot>
        </Tray>
      </Taskbar>
    </Page>
  );
}
